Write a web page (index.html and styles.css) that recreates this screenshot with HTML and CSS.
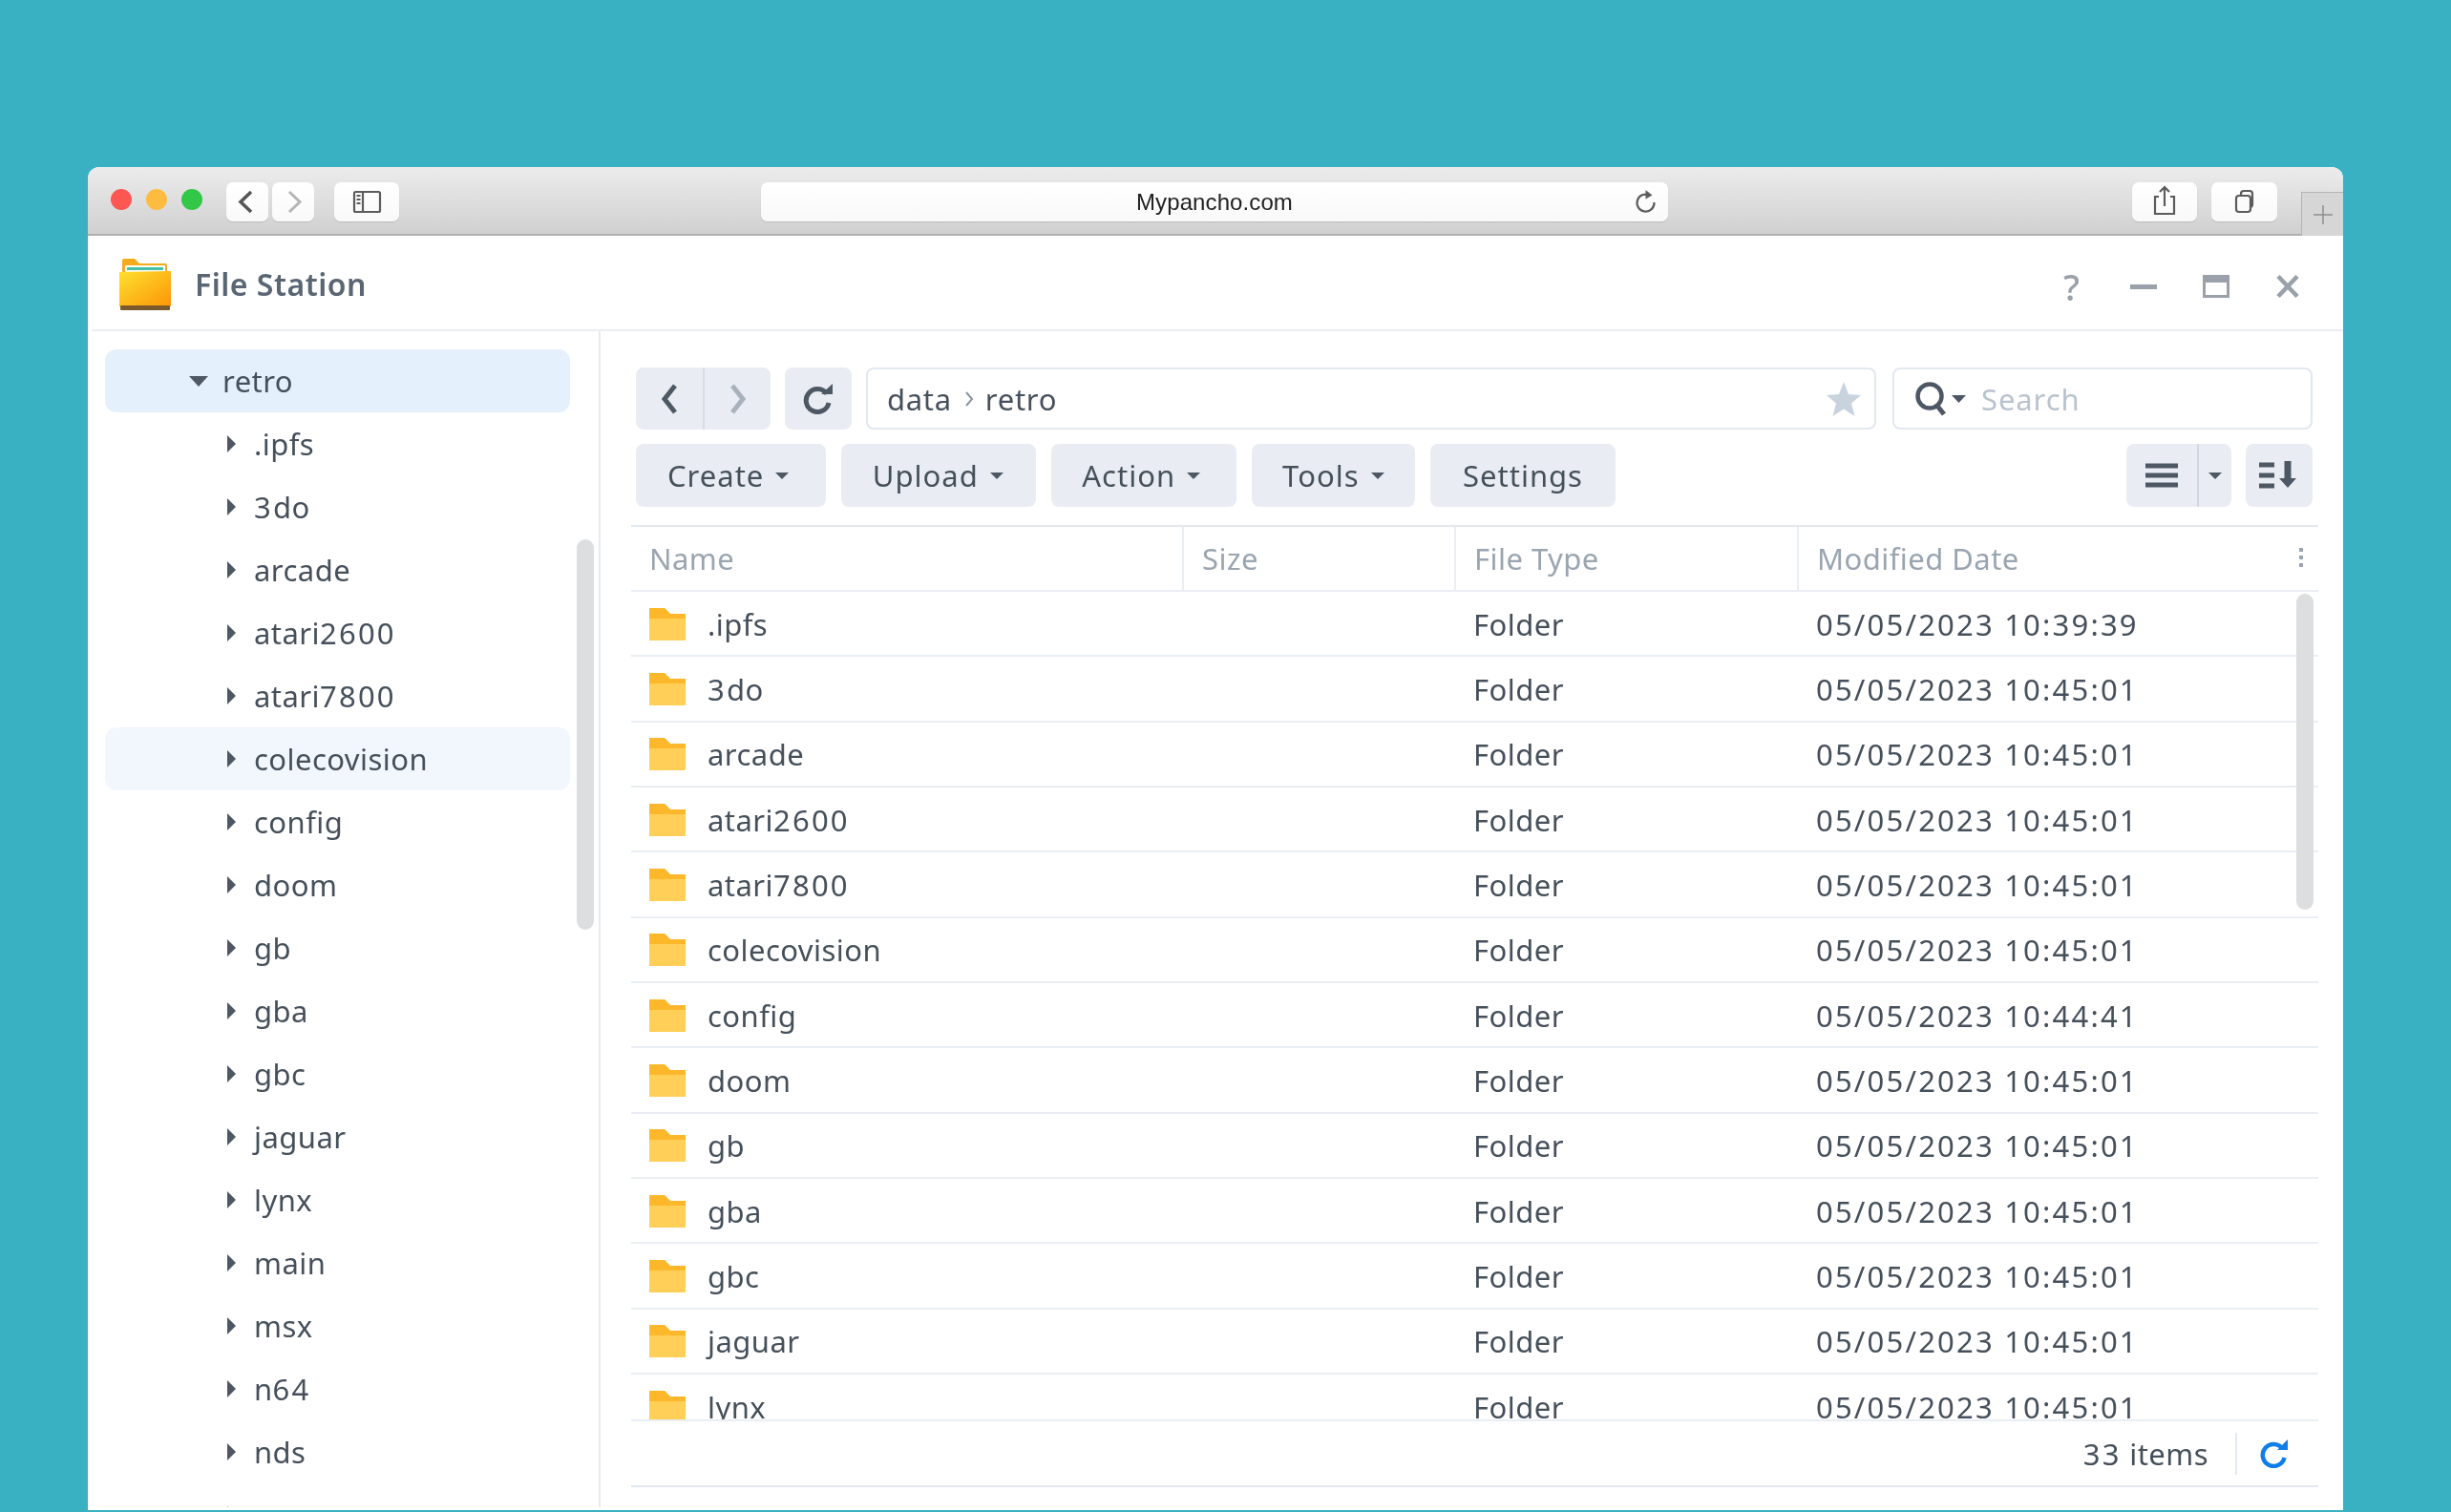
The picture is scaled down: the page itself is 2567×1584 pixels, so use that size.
FILE: index.html
```html
<!DOCTYPE html>
<html lang="en">
<head>
<meta charset="utf-8">
<title>File Station</title>
<link rel="stylesheet" href="styles.css">
</head>
<body>
<div class="window">
  <header class="chrome">
    <span class="light red"></span><span class="light amber"></span><span class="light green"></span>
    <div class="cbtn nav first"><svg width="44" height="41" viewBox="0 0 44 41"><path d="M26 10 L15 20.5 L26 31" class="st dark"/></svg></div>
    <div class="cbtn nav"><svg width="44" height="41" viewBox="0 0 44 41"><path d="M18 10 L29 20.5 L18 31" class="st light-st"/></svg></div>
    <div class="cbtn side"><svg width="68" height="41" viewBox="0 0 68 41"><rect x="21" y="10" width="27" height="21" rx="1.5" class="st thin"/><path d="M30 10V31" class="st thin"/><path d="M23.5 14h4M23.5 18h4M23.5 22h4" class="st thin"/></svg></div>
    <div class="cbtn url"><span class="url-text">Mypancho.com</span>
      <svg class="url-reload" width="24" height="28" viewBox="0 0 24 28"><path d="M15.5 7.5 A9 9 0 1 0 20.5 15" class="st thin"/><path d="M11.5 2 L18.5 7.5 L11.5 11.5 Z" class="fill-dark"/></svg>
    </div>
    <div class="cbtn share"><svg width="68" height="41" viewBox="0 0 68 41"><path d="M28 15H24V33H44V15H40" class="st thin"/><path d="M34 25V5M29 10L34 5L39 10" class="st thin"/></svg></div>
    <div class="cbtn tabs"><svg width="69" height="41" viewBox="0 0 69 41"><rect x="26" y="14" width="15" height="17" rx="3" class="st thin"/><path d="M31 14V12a3 3 0 0 1 3-3h6a3 3 0 0 1 3 3v11a3 3 0 0 1-2 3" class="st thin"/></svg></div>
    <div class="newtab"><svg width="22" height="22" viewBox="0 0 22 22"><path d="M11 1V21M1 11H21" class="st plus"/></svg></div>
  </header>

  <div class="titlebar">
    <svg class="appicon" width="56" height="56" viewBox="0 0 56 56">
      <defs><linearGradient id="fold" x1="0" y1="0" x2="1" y2="1"><stop offset="0" stop-color="#fde02f"/><stop offset="1" stop-color="#fd9506"/></linearGradient></defs>
      <path d="M4 12V2a2 2 0 0 1 2-2h11l5 5h27a2 2 0 0 1 2 2v10H4Z" fill="#f4ab1c"/>
      <rect x="7" y="7" width="42" height="12" fill="#fdfdf6"/>
      <rect x="9" y="9" width="38" height="3" fill="#46c1a6"/>
      <path d="M1 14 L55 13 V50 H1 Z" fill="url(#fold)"/>
      <rect x="2" y="49" width="52" height="5" rx="1" fill="#7a5a2c"/>
    </svg>
    <span class="apptitle">File Station</span>
    <div class="winctl">
      <span class="ctl q">?</span>
      <span class="ctl"><svg width="28" height="24" viewBox="0 0 28 24"><rect x="0" y="10" width="28" height="5" fill="#9aa1ab"/></svg></span>
      <span class="ctl"><svg width="28" height="24" viewBox="0 0 28 24"><rect x="1.5" y="1.5" width="25" height="21" fill="none" stroke="#9aa1ab" stroke-width="3"/><rect x="0" y="0" width="28" height="8" fill="#9aa1ab"/></svg></span>
      <span class="ctl"><svg width="26" height="24" viewBox="0 0 26 24"><path d="M3 1.5L23 22.5M23 1.5L3 22.5" fill="none" stroke="#9aa1ab" stroke-width="4.5"/></svg></span>
    </div>
  </div>

  <div class="main">
    <aside class="sidebar">
      <div class="tree-item root"><svg class="tw-down" width="20" height="11" viewBox="0 0 20 11"><path d="M0 0H20L10 11Z"/></svg>retro</div>
      <div class="tree-item"><svg class="tw" width="9" height="18" viewBox="0 0 9 18"><path d="M0 0L9 9L0 18Z"/></svg>.ipfs</div>
      <div class="tree-item"><svg class="tw" width="9" height="18" viewBox="0 0 9 18"><path d="M0 0L9 9L0 18Z"/></svg><span><span class="num">3</span>do</span></div>
      <div class="tree-item"><svg class="tw" width="9" height="18" viewBox="0 0 9 18"><path d="M0 0L9 9L0 18Z"/></svg>arcade</div>
      <div class="tree-item"><svg class="tw" width="9" height="18" viewBox="0 0 9 18"><path d="M0 0L9 9L0 18Z"/></svg><span>atari<span class="num">2600</span></span></div>
      <div class="tree-item"><svg class="tw" width="9" height="18" viewBox="0 0 9 18"><path d="M0 0L9 9L0 18Z"/></svg><span>atari<span class="num">7800</span></span></div>
      <div class="tree-item hover"><svg class="tw" width="9" height="18" viewBox="0 0 9 18"><path d="M0 0L9 9L0 18Z"/></svg>colecovision</div>
      <div class="tree-item"><svg class="tw" width="9" height="18" viewBox="0 0 9 18"><path d="M0 0L9 9L0 18Z"/></svg>config</div>
      <div class="tree-item"><svg class="tw" width="9" height="18" viewBox="0 0 9 18"><path d="M0 0L9 9L0 18Z"/></svg>doom</div>
      <div class="tree-item"><svg class="tw" width="9" height="18" viewBox="0 0 9 18"><path d="M0 0L9 9L0 18Z"/></svg>gb</div>
      <div class="tree-item"><svg class="tw" width="9" height="18" viewBox="0 0 9 18"><path d="M0 0L9 9L0 18Z"/></svg>gba</div>
      <div class="tree-item"><svg class="tw" width="9" height="18" viewBox="0 0 9 18"><path d="M0 0L9 9L0 18Z"/></svg>gbc</div>
      <div class="tree-item"><svg class="tw" width="9" height="18" viewBox="0 0 9 18"><path d="M0 0L9 9L0 18Z"/></svg>jaguar</div>
      <div class="tree-item"><svg class="tw" width="9" height="18" viewBox="0 0 9 18"><path d="M0 0L9 9L0 18Z"/></svg>lynx</div>
      <div class="tree-item"><svg class="tw" width="9" height="18" viewBox="0 0 9 18"><path d="M0 0L9 9L0 18Z"/></svg>main</div>
      <div class="tree-item"><svg class="tw" width="9" height="18" viewBox="0 0 9 18"><path d="M0 0L9 9L0 18Z"/></svg>msx</div>
      <div class="tree-item"><svg class="tw" width="9" height="18" viewBox="0 0 9 18"><path d="M0 0L9 9L0 18Z"/></svg><span>n<span class="num">64</span></span></div>
      <div class="tree-item"><svg class="tw" width="9" height="18" viewBox="0 0 9 18"><path d="M0 0L9 9L0 18Z"/></svg>nds</div>
      <div class="tree-item"><svg class="tw" width="9" height="18" viewBox="0 0 9 18"><path d="M0 0L9 9L0 18Z"/></svg>nes</div>
      <div class="scroll side-scroll"></div>
    </aside>

    <section class="content">
      <div class="bar pathbar">
        <div class="group">
          <span class="gbtn nv"><svg width="22" height="34" viewBox="0 0 22 34"><path d="M17 3L6 17L17 31" fill="none" stroke="#4d5864" stroke-width="5"/></svg></span>
          <span class="gbtn nv"><svg width="22" height="34" viewBox="0 0 22 34"><path d="M5 3L16 17L5 31" fill="none" stroke="#a9b2bc" stroke-width="5"/></svg></span>
        </div>
        <span class="gbtn refresh"><svg width="32" height="32" viewBox="0 0 32 32"><path d="M25 10.5A12 12 0 1 0 27 20" fill="none" stroke="#4d5864" stroke-width="5"/><path d="M19 11H31V0Z" fill="#4d5864"/></svg></span>
        <div class="path">
          <span>data</span><svg class="crumb" width="10" height="18" viewBox="0 0 10 18"><path d="M2 2L8 9L2 16" fill="none" stroke="#8b95a0" stroke-width="2"/></svg><span>retro</span>
          <svg class="star" width="36" height="36" viewBox="0 0 36 36"><path d="M18 0L23 13L36 14L26 22.500L29.500 36L18 28.500L6.500 36L10 22.500L0 14L13 13Z" fill="#c8d3de"/></svg>
        </div>
        <div class="search">
          <svg width="40" height="40" viewBox="0 0 40 40"><circle cx="17" cy="17" r="12.500" fill="none" stroke="#4d5864" stroke-width="4.500"/><path d="M24 26L32 36" stroke="#4d5864" stroke-width="5" fill="none"/></svg>
          <svg class="cap" width="15" height="8" viewBox="0 0 15 8"><path d="M0 0H15L7.500 8Z" fill="#4d5864"/></svg>
          <span>Search</span>
        </div>
      </div>
      <div class="bar actions">
        <span class="btn">Create<i class="caret"></i></span>
        <span class="btn">Upload<i class="caret"></i></span>
        <span class="btn">Action<i class="caret"></i></span>
        <span class="btn">Tools<i class="caret"></i></span>
        <span class="btn">Settings</span>
        <div class="viewgroup">
          <span class="gbtn list"><svg width="34" height="26" viewBox="0 0 34 26"><path d="M0 3H34M0 13H34M0 23H34" stroke="#4d5864" stroke-width="5"/></svg></span>
          <span class="gbtn drop"><i class="caret big"></i></span>
        </div>
        <span class="gbtn sort"><svg width="44" height="30" viewBox="0 0 44 30"><path d="M0 4H16M0 15H16M0 26H16" stroke="#4d5864" stroke-width="5"/><path d="M30 0V19" stroke="#4d5864" stroke-width="7"/><path d="M21 18H39L30 28Z" fill="#4d5864"/></svg></span>
      </div>

      <div class="table">
        <div class="thead">
          <span>Name</span><span>Size</span><span>File Type</span><span>Modified Date</span>
          <svg class="kebab" width="4" height="20" viewBox="0 0 4 20"><path d="M0 0h4v4H0zM0 8h4v4H0zM0 16h4v4H0z" fill="#9aa5b0"/></svg>
        </div>
        <div class="tbody">
          <div class="row"><span class="name"><svg class="ficon" width="38" height="34" viewBox="0 0 38 34"><path d="M0 0H16L22 6H38V34H0Z" fill="#ffcf57"/><path d="M0 0H16L22 6H38V11H0Z" fill="#fdb72b"/></svg>.ipfs</span><span></span><span>Folder</span><span class="date">05/05/2023 10:39:39</span></div>
          <div class="row"><span class="name"><svg class="ficon" width="38" height="34" viewBox="0 0 38 34"><path d="M0 0H16L22 6H38V34H0Z" fill="#ffcf57"/><path d="M0 0H16L22 6H38V11H0Z" fill="#fdb72b"/></svg><span class="plain"><span class="num">3</span>do</span></span><span></span><span>Folder</span><span class="date">05/05/2023 10:45:01</span></div>
          <div class="row"><span class="name"><svg class="ficon" width="38" height="34" viewBox="0 0 38 34"><path d="M0 0H16L22 6H38V34H0Z" fill="#ffcf57"/><path d="M0 0H16L22 6H38V11H0Z" fill="#fdb72b"/></svg>arcade</span><span></span><span>Folder</span><span class="date">05/05/2023 10:45:01</span></div>
          <div class="row"><span class="name"><svg class="ficon" width="38" height="34" viewBox="0 0 38 34"><path d="M0 0H16L22 6H38V34H0Z" fill="#ffcf57"/><path d="M0 0H16L22 6H38V11H0Z" fill="#fdb72b"/></svg><span class="plain">atari<span class="num">2600</span></span></span><span></span><span>Folder</span><span class="date">05/05/2023 10:45:01</span></div>
          <div class="row"><span class="name"><svg class="ficon" width="38" height="34" viewBox="0 0 38 34"><path d="M0 0H16L22 6H38V34H0Z" fill="#ffcf57"/><path d="M0 0H16L22 6H38V11H0Z" fill="#fdb72b"/></svg><span class="plain">atari<span class="num">7800</span></span></span><span></span><span>Folder</span><span class="date">05/05/2023 10:45:01</span></div>
          <div class="row"><span class="name"><svg class="ficon" width="38" height="34" viewBox="0 0 38 34"><path d="M0 0H16L22 6H38V34H0Z" fill="#ffcf57"/><path d="M0 0H16L22 6H38V11H0Z" fill="#fdb72b"/></svg>colecovision</span><span></span><span>Folder</span><span class="date">05/05/2023 10:45:01</span></div>
          <div class="row"><span class="name"><svg class="ficon" width="38" height="34" viewBox="0 0 38 34"><path d="M0 0H16L22 6H38V34H0Z" fill="#ffcf57"/><path d="M0 0H16L22 6H38V11H0Z" fill="#fdb72b"/></svg>config</span><span></span><span>Folder</span><span class="date">05/05/2023 10:44:41</span></div>
          <div class="row"><span class="name"><svg class="ficon" width="38" height="34" viewBox="0 0 38 34"><path d="M0 0H16L22 6H38V34H0Z" fill="#ffcf57"/><path d="M0 0H16L22 6H38V11H0Z" fill="#fdb72b"/></svg>doom</span><span></span><span>Folder</span><span class="date">05/05/2023 10:45:01</span></div>
          <div class="row"><span class="name"><svg class="ficon" width="38" height="34" viewBox="0 0 38 34"><path d="M0 0H16L22 6H38V34H0Z" fill="#ffcf57"/><path d="M0 0H16L22 6H38V11H0Z" fill="#fdb72b"/></svg>gb</span><span></span><span>Folder</span><span class="date">05/05/2023 10:45:01</span></div>
          <div class="row"><span class="name"><svg class="ficon" width="38" height="34" viewBox="0 0 38 34"><path d="M0 0H16L22 6H38V34H0Z" fill="#ffcf57"/><path d="M0 0H16L22 6H38V11H0Z" fill="#fdb72b"/></svg>gba</span><span></span><span>Folder</span><span class="date">05/05/2023 10:45:01</span></div>
          <div class="row"><span class="name"><svg class="ficon" width="38" height="34" viewBox="0 0 38 34"><path d="M0 0H16L22 6H38V34H0Z" fill="#ffcf57"/><path d="M0 0H16L22 6H38V11H0Z" fill="#fdb72b"/></svg>gbc</span><span></span><span>Folder</span><span class="date">05/05/2023 10:45:01</span></div>
          <div class="row"><span class="name"><svg class="ficon" width="38" height="34" viewBox="0 0 38 34"><path d="M0 0H16L22 6H38V34H0Z" fill="#ffcf57"/><path d="M0 0H16L22 6H38V11H0Z" fill="#fdb72b"/></svg>jaguar</span><span></span><span>Folder</span><span class="date">05/05/2023 10:45:01</span></div>
          <div class="row"><span class="name"><svg class="ficon" width="38" height="34" viewBox="0 0 38 34"><path d="M0 0H16L22 6H38V34H0Z" fill="#ffcf57"/><path d="M0 0H16L22 6H38V11H0Z" fill="#fdb72b"/></svg>lynx</span><span></span><span>Folder</span><span class="date">05/05/2023 10:45:01</span></div>
          <div class="scroll table-scroll"></div>
        </div>
        <div class="tfoot">
          <span><b class="num">33</b>&nbsp;items</span>
          <svg class="foot-reload" width="30" height="30" viewBox="0 0 30 30"><path d="M23.500 9.500A11.500 11.500 0 1 0 25.500 19" fill="none" stroke="#0f7ee8" stroke-width="4.500"/><path d="M18 11H29V0Z" fill="#0f7ee8"/></svg>
        </div>
      </div>
    </section>
  </div>
</div>
</body>
</html>
```

FILE: styles.css
```css
* { box-sizing: border-box; }
html, body { margin: 0; height: 100%; }
body {
  background: #3ab1c3;
  padding: 175px 0 0 92px;
  overflow: hidden;
  font-family: "Noto Sans", "Open Sans", sans-serif;
  font-size: 31px;
  letter-spacing: .45px;
  color: #46505b;
}
.num { letter-spacing: 2.2px; font-weight: 400; }
.date { letter-spacing: 2.2px; }
.window {
  width: 2362px;
  height: 1407px;
  background: #fff;
  border-radius: 12px 12px 0 0;
  overflow: hidden;
  display: flex;
  flex-direction: column;
  filter: blur(.5px);
}
.st { fill: none; stroke: #555; stroke-width: 2.5; }
.st.dark { stroke: #555; stroke-width: 3.500; }
.st.light-st { stroke: #b5b5b5; stroke-width: 3; }
.st.thin { stroke: #5c5c5c; stroke-width: 2.2; }
.st.plus { stroke: #8e8e8e; stroke-width: 1.500; }
.fill-dark { fill: #5c5c5c; }

/* browser chrome */
.chrome {
  height: 72px;
  flex: none;
  display: flex;
  align-items: flex-start;
  padding: 16px 0 0 24px;
  background: linear-gradient(#ececec, #d0d0d0);
  border-bottom: 2px solid #b0b0b0;
}
.light { width: 22px; height: 22px; border-radius: 50%; margin: 7px 15px 0 0; flex: none; }
.red { background: #fc5753; }
.amber { background: #fdbc40; }
.green { background: #33c748; margin-right: 0; }
.cbtn {
  height: 41px;
  background: linear-gradient(#fff, #f9f9f9);
  border-radius: 7px;
  box-shadow: 0 1px 1px rgba(0,0,0,.12);
  flex: none;
  display: flex;
  align-items: center;
  justify-content: center;
}
.nav { width: 44px; margin-left: 4px; }
.nav.first { margin-left: 25px; }
.side { width: 68px; margin-left: 21px; }
.url { width: 950px; margin-left: 379px; position: relative; font-family: "Liberation Sans", Arial, sans-serif; font-size: 24px; letter-spacing: .1px; color: #222; }
.url-reload { position: absolute; right: 11px; top: 6px; }
.share { width: 68px; margin-left: 486px; }
.tabs { width: 69px; margin-left: 15px; }
.newtab {
  width: 44px;
  height: 46px;
  margin: 10px 0 0 auto;
  border: 1.5px solid #b4b4b4;
  border-right: 0;
  border-bottom: 0;
  background: #d6d6d6;
  display: flex;
  align-items: center;
  justify-content: center;
}

/* title bar */
.titlebar {
  height: 100px;
  flex: none;
  display: flex;
  align-items: center;
  padding: 2px 20px 0 33px;
  border-bottom: 2px solid #e9eef4;
  margin-left: 4px;
}
.appicon { margin: 4px 0 0 -5px; flex: none; }
.apptitle { margin-left: 24px; font-size: 32px; letter-spacing: .5px; font-weight: 600; color: #5a6673; }
.winctl { margin: 5px 0 0 auto; display: flex; }
.ctl { width: 75.500px; height: 40px; display: flex; align-items: center; justify-content: center; }
.q { font-size: 38px; color: #9aa1ab; font-weight: 500; }

/* main */
.main { flex: 1; display: flex; min-height: 0; }
.sidebar {
  position: relative;
  width: 537px;
  flex: none;
  padding: 19px 0 0 18px;
  border-right: 2px solid #e6ebf1;
  overflow: hidden;
  height: 1232px;
}
.tree-item {
  width: 487px;
  height: 66px;
  border-radius: 12px;
  display: flex;
  align-items: center;
  padding-left: 128px;
  color: #46505b;
}
.tree-item.root { background: #e4f0fc; padding-left: 88px; }
.tree-item.hover { background: #f1f7fd; }
.tw { fill: #4d5864; margin-right: 19px; flex: none; }
.tw-down { fill: #4d5864; margin-right: 15px; flex: none; }
.scroll { position: absolute; width: 18px; background: #dcdee0; border-radius: 9px; }
.side-scroll { left: 512px; top: 218px; height: 409px; }
.table-scroll { left: 1744px; top: 2px; height: 331px; }

/* content */
.content { flex: 1; padding: 38px 0 0 32px; min-width: 0; }
.bar { display: flex; padding-left: 5px; width: 1761px; }
.pathbar { height: 65px; }
.actions { height: 66px; margin-top: 15px; }
.group { display: flex; width: 141px; height: 65px; flex: none; }
.gbtn {
  background: #e9edf3;
  display: flex;
  align-items: center;
  justify-content: center;
  flex: none;
  height: 100%;
}
.gbtn.nv { width: 70px; border-radius: 8px 0 0 8px; }
.gbtn.nv + .gbtn.nv { width: 71px; border-radius: 0 8px 8px 0; border-left: 2px solid #d5dce4; }
.gbtn.refresh { width: 70px; margin-left: 15px; border-radius: 8px; }
.path {
  flex: 1;
  margin-left: 15px;
  border: 2px solid #e1e8f0;
  border-radius: 8px;
  display: flex;
  align-items: center;
  padding: 0 0 0 20px;
  letter-spacing: .7px;
  color: #46505b;
}
.crumb { margin: 0 12px 0 13px; }
.star { margin-left: auto; margin-right: 14px; }
.search {
  width: 440px;
  margin-left: 17px;
  flex: none;
  border: 2px solid #e1e8f0;
  border-radius: 8px;
  display: flex;
  align-items: center;
  padding-left: 20px;
  letter-spacing: .9px;
  color: #b9c3cd;
}
.search .cap { margin: 0 16px 0 0; }
.btn {
  height: 66px;
  background: #e9edf3;
  border-radius: 8px;
  margin-right: 16px;
  display: flex;
  align-items: center;
  letter-spacing: 1px;
  color: #46505b;
  flex: none;
}
.btn:nth-child(1) { padding: 0 38.500px 0 33px; }
.btn:nth-child(2) { padding: 0 34.500px 0 33px; }
.btn:nth-child(3) { padding: 0 38px 0 32px; }
.btn:nth-child(4) { padding: 0 32.500px 0 32px; }
.btn:nth-child(5) { padding: 0 34px; }
.caret {
  display: block;
  width: 0;
  height: 0;
  margin-left: 12px;
  border: 7px solid transparent;
  border-top: 7px solid #4d5864;
  border-bottom: 0;
}
.caret.big { margin: 0; border-width: 7px 7.500px 0; }
.viewgroup { margin-left: auto; display: flex; height: 66px; }
.gbtn.list { width: 74px; border-radius: 8px 0 0 8px; }
.gbtn.drop { width: 36px; border-radius: 0 8px 8px 0; border-left: 2px solid #d0d7df; }
.gbtn.sort { width: 70px; margin-left: 15px; border-radius: 8px; padding-left: 2px; }

/* table */
.table { width: 1767px; margin-top: 19px; }
.thead, .row {
  display: grid;
  grid-template-columns: 577px 285px 359px 1fr;
  align-items: center;
}
.thead {
  position: relative;
  height: 70px;
  border-top: 2px solid #e1e8f0;
  border-bottom: 2px solid #e9eef4;
  color: #9aa5b0;
}
.thead span { height: 100%; display: flex; align-items: center; padding-left: 19px; border-left: 2px solid #e9eef4; }
.thead span:first-child { border-left: 0; padding-left: 19px; }
.kebab { position: absolute; right: 16px; top: 22px; }
.tbody { position: relative; height: 869px; overflow: hidden; border-bottom: 2px solid #e9eef4; }
.row {
  height: 68.330px;
  padding-top: 1px;
  border-bottom: 2px solid #e9eef4;
  color: #46505b;
}
.row > span { padding-left: 20px; }
.row > span:first-child { padding-left: 19px; }
.name { display: flex; align-items: center; }
.ficon { margin-right: 23px; flex: none; }
.tfoot {
  height: 69px;
  border-bottom: 2px solid #e1e8f0;
  display: flex;
  align-items: center;
  justify-content: flex-end;
  color: #46505b;
}
.tfoot span { padding-right: 28px; border-right: 2px solid #e3e9f0; height: 44px; display: flex; align-items: center; }
.foot-reload { margin: 0 31px 0 24px; }
```
